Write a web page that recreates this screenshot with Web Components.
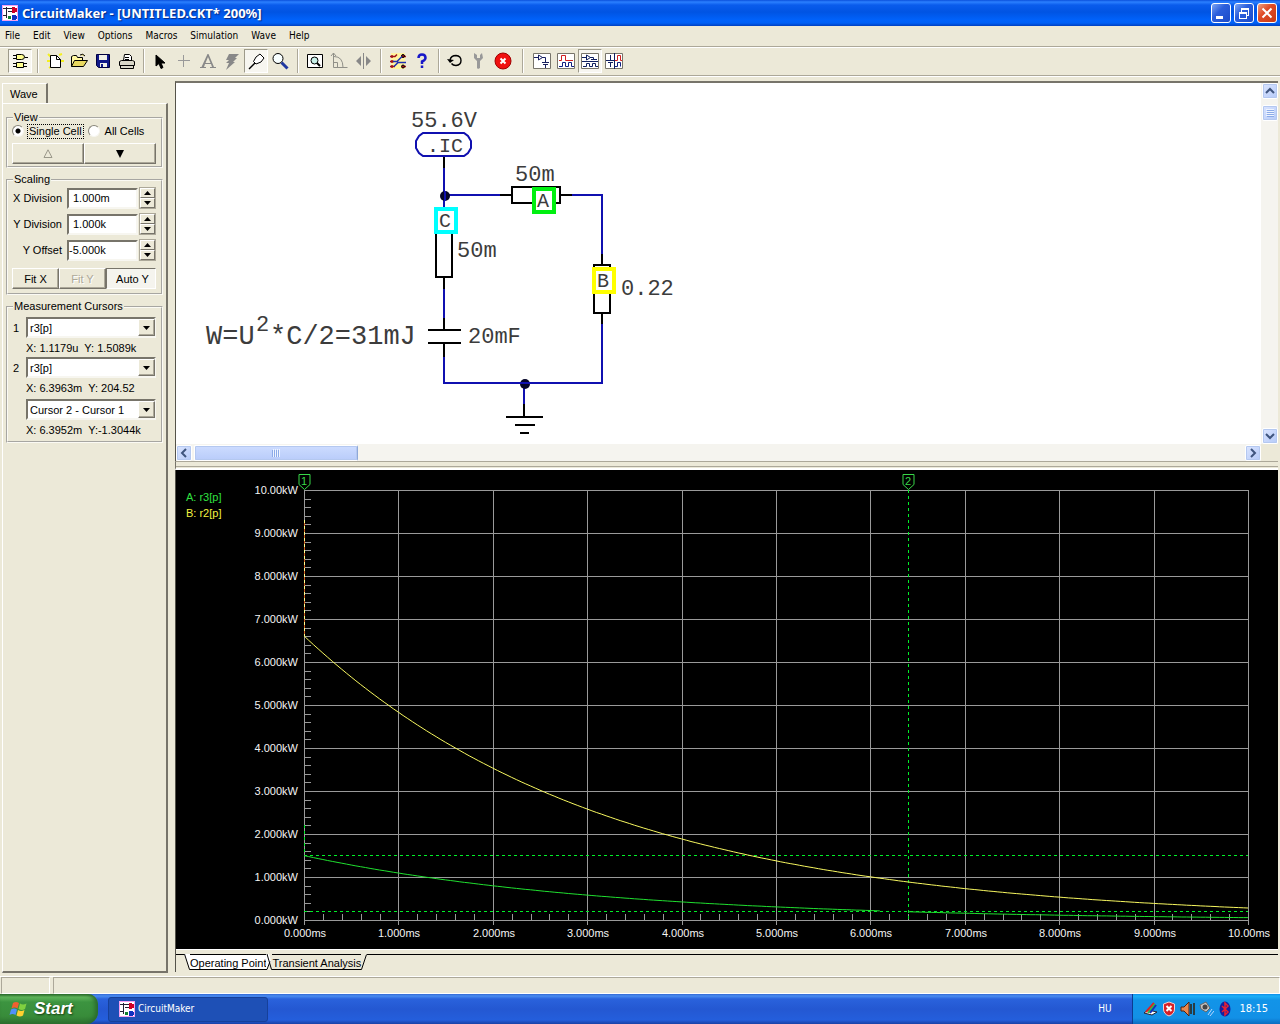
<!DOCTYPE html>
<html lang="en">
<head>
<meta charset="utf-8">
<title>CircuitMaker - [UNTITLED.CKT* 200%]</title>
<style>
  html, body { height: 100%; margin: 0; }
  body { background: #ece9d8; color: #000; font: 11px/14px "Liberation Sans", sans-serif; overflow: hidden; }
</style>
</head>
<body>
<circuit-app></circuit-app>
<script>
const logo = `<svg width="16" height="16" viewBox="0 0 16 16" shape-rendering="crispEdges"><path fill="#f4a0f0" d="M0 0h16v16H0z"/><path fill="#fff" d="M1 1h14v14H1z"/><path stroke="#223" stroke-width="1" fill="none" d="M1 3.500h9M4.500 2v11M1 10.500h4M6 6.500h4"/><path fill="#d00028" d="M10 2h3v1h2v4h-2v1h-3z"/><path fill="#1030c0" d="M10 10h4v1h1v3h-1v1h-4z"/><path fill="#108030" d="M6 11h3v3H6z"/></svg>`;

const base = `*{box-sizing:border-box} svg{display:block} button{font:inherit;color:inherit;padding:0;margin:0;border:0;background:none}`;
function define(name, html, setup) {
  const t = document.createElement('template');
  t.innerHTML = html;
  const style = document.createElement('style');
  style.textContent = base;
  t.content.prepend(style);
  customElements.define(name, class extends HTMLElement {
    connectedCallback() {
      if (this.shadowRoot) return;
      this.attachShadow({ mode: 'open' }).append(t.content.cloneNode(true));
      if (setup) setup(this, this.shadowRoot);
    }
  });
}

/* ---------- title bar ---------- */
define('title-bar', `<style>
:host{display:flex;align-items:center;gap:4px;height:26px;padding:0 3px 0 2px;flex:none;color:#fff;
 background:linear-gradient(#0a50dc 0,#2b80ff 2px,#0a5cec 5px,#0054e3 12px,#0062fb 20px,#0060f6 23px,#0040c0 26px)}
h1{flex:1;margin:0;font:bold 13px/20px "Noto Sans",sans-serif;text-shadow:1px 1px 1px #0a2a80;white-space:nowrap}
.b{display:flex;gap:3px}
button{width:20px;height:20px;border:1px solid #fff;border-radius:3px;background:linear-gradient(135deg,#7ea6f4,#2c5fdc 40%,#1c4bc8)}
button.x{background:linear-gradient(135deg,#f0a080,#e04c28 40%,#c83a14)}
</style>${logo}<h1><slot></slot></h1><div class="b">
<button aria-label="Minimize"><svg width="18" height="18"><path fill="#fff" d="M4 12h7v3H4z"/></svg></button>
<button aria-label="Restore"><svg width="18" height="18" fill="none" stroke="#fff" shape-rendering="crispEdges"><path stroke-width="2" d="M6 5h8M4 9h8"/><path d="M6.500 5v3M13.500 5v6.500h-2M4.500 9v5.500h7V9"/></svg></button>
<button class="x" aria-label="Close"><svg width="18" height="18" stroke="#fff" stroke-width="2"><path d="M4.500 4.500l9 9M13.500 4.500l-9 9"/></svg></button></div>`);

/* ---------- menu ---------- */
define('menu-bar', `<style>
:host{display:flex;gap:13px;height:20px;padding:0 5px;flex:none}
</style><slot></slot>`);
define('menu-item', `<style>:host{display:block;font:10px/20px "DejaVu Sans Condensed","Noto Sans",sans-serif}</style><button role="menuitem"><slot></slot></button>`);

/* ---------- tool bar ---------- */
define('tool-bar', `<style>
:host{display:flex;align-items:center;height:30px;padding:0 8px;flex:none;border-top:1px solid #aca899;border-bottom:1px solid #aca899;box-shadow:inset 0 1px #fff,0 1px #fff}
</style><slot></slot>`);
define('tool-button', `<style>
:host{display:block}
button{display:flex;align-items:center;justify-content:center;width:24px;height:24px}
:host([pressed]) button{border:1px solid;border-color:#9d9a8a #fff #fff #9d9a8a;background:#f7f6f0}
</style><button><slot></slot></button>`, (h, r) => r.querySelector('button').setAttribute('aria-label', h.getAttribute('label')));
define('tool-gap', `<style>
:host{display:flex;justify-content:center;width:11px;height:24px}
:host([size=narrow]){width:9px}:host([size=wide]){width:15px}
i{width:2px;border-left:1px solid #aca899;border-right:1px solid #fff}</style><i></i>`);

/* ---------- side panel ---------- */
define('group-box', `<style>
:host{display:block}
fieldset{margin:0;padding:0 5px 2px 4px;min-width:0;border:2px groove #fbfaf4}
legend{padding:0 1px;margin-left:1px;line-height:13px}
.c{padding-top:var(--inset,0)}
</style><fieldset><legend></legend><div class="c"><slot></slot></div></fieldset>`, (h, r) => r.querySelector('legend').textContent = h.getAttribute('label'));

define('view-choice', `<style>
:host{display:block}
.r{display:flex;gap:5px;height:14px;align-items:center}
label{display:flex;align-items:center;gap:4px;white-space:nowrap}
label span{padding:0 1px;line-height:13px}
label:first-child span{outline:1px dotted #000}
input{appearance:none;width:12px;height:12px;margin:0;border-radius:50%;border:1px solid;border-color:#87857a #f7f6f0 #f7f6f0 #87857a;background:#fff}
input:checked{background:radial-gradient(circle,#000 0 2px,#fff 3px)}
.b{display:flex;margin-top:5px}
button{flex:1;height:21px;border:1px solid;border-color:#fff #77746a #77746a #fff;box-shadow:inset -1px -1px #aca899;display:grid;place-items:center}
</style><div class="r"><label><input type="radio" name="cells" checked><span>Single Cell</span></label><label><input type="radio" name="cells"><span>All Cells</span></label></div>
<div class="b"><button disabled aria-label="Previous cell"><svg width="10" height="9" fill="none" stroke="#9a988a"><path d="M5 .8L9 8.500H1z"/></svg></button><button aria-label="Next cell"><svg width="10" height="9"><path d="M1 1h8L5 9z"/></svg></button></div>`);

define('spin-field', `<style>
:host{display:flex;align-items:center;height:22px;margin-bottom:4px}
label{flex:1;text-align:right;padding-right:5px;white-space:nowrap;line-height:20px}
input{width:71px;height:21px;font:inherit;border:2px solid;border-color:#77746a #f7f6f0 #f7f6f0 #77746a;padding:0 0 0 4px;background:#fff;outline:0}
:host([tight]) input{padding-left:0}
.s{display:flex;flex-direction:column;margin-left:1px;border:1px solid #aca899;width:17px}
button{width:15px;height:10px;border:1px solid;border-color:#fff #77746a #77746a #fff;display:grid;place-items:center}
</style><label for="v"></label><input id="v"><span class="s"><button aria-label="Increase"><svg width="7" height="4"><path d="M0 4h7L3.500 0z"/></svg></button><button aria-label="Decrease"><svg width="7" height="4"><path d="M0 0h7L3.500 4z"/></svg></button></span>`,
 (h, r) => { r.querySelector('label').textContent = h.getAttribute('label'); r.querySelector('input').value = h.getAttribute('value'); });

define('fit-buttons', `<style>
:host{display:flex;margin:7px 0 2px}
button{flex:1;height:21px;border:1px solid;border-color:#fff #77746a #77746a #fff;box-shadow:inset -1px -1px #aca899}
button:disabled{color:#aca899;text-shadow:1px 1px #fff}
button.on{border-color:#77746a #fff #fff #77746a;background:#f5f4ee;box-shadow:none;padding:1px 0 0 3px}
</style><button>Fit X</button><button disabled>Fit Y</button><button class="on" aria-pressed="true">Auto Y</button>`);

define('cursor-pick', `<style>
:host{display:grid;grid-template-columns:14px 1fr;align-items:center;margin-bottom:1px}
:host([last]){margin-top:3px}
label{padding-left:1px}
.w{position:relative}
select{appearance:none;display:block;width:100%;height:21px;margin:0;font:inherit;color:#000;padding:0 18px 0 2px;border:2px solid;border-color:#77746a #f7f6f0 #f7f6f0 #77746a;border-radius:0;background:#fff}
.w i{position:absolute;right:1px;top:2px;width:17px;height:17px;pointer-events:none;display:grid;place-items:center;background:#ece9d8;border:1px solid;border-color:#fff #77746a #77746a #fff;box-shadow:inset -1px -1px #aca899}
p{grid-column:2;margin:0;height:18px;line-height:20px;white-space:pre}
</style><label for="s"></label><span class="w"><select id="s"><option></option></select><i><svg width="7" height="4"><path d="M0 0h7L3.500 4z"/></svg></i></span><p></p>`,
 (h, r) => { r.querySelector('label').textContent = h.getAttribute('label') || ''; r.querySelector('select').ariaLabel = 'Cursor source'; r.querySelector('option').textContent = h.getAttribute('value'); r.querySelector('p').textContent = h.getAttribute('reading'); });

define('side-panel', `<style>
:host{display:flex;flex-direction:column;width:168px;flex:none;padding:7px 0 3px 2px}
.tab{align-self:flex-start;width:46px;height:20px;border-left:1px solid #fff;border-top:1px solid #fff;border-right:2px solid #77746a;text-align:left;padding-left:7px;font-size:11px}
.body{flex:1;border:1px solid #fff;border-right:2px solid #77746a;border-bottom:2px solid #77746a;padding:7px 3px 0 3px;display:flex;flex-direction:column;gap:5px}
.scale{--inset:1px}.meas{--inset:4px}
</style><button class="tab" role="tab">Wave</button><div class="body">
<group-box label="View"><view-choice></view-choice></group-box>
<group-box class="scale" label="Scaling"><spin-field label="X Division" value="1.000m"></spin-field><spin-field label="Y Division" value="1.000k"></spin-field><spin-field tight label="Y Offset" value="-5.000k"></spin-field><fit-buttons></fit-buttons></group-box>
<group-box class="meas" label="Measurement Cursors"><cursor-pick label="1" value="r3[p]" reading="X: 1.1179u  Y: 1.5089k"></cursor-pick><cursor-pick label="2" value="r3[p]" reading="X: 6.3963m  Y: 204.52"></cursor-pick><cursor-pick last value="Cursor 2 - Cursor 1" reading="X: 6.3952m  Y:-1.3044k"></cursor-pick></group-box>
</div>`);

/* ---------- scroll bars ---------- */
define('scroll-track', `<style>
:host{display:flex;flex:none;background:#f5f4ef;gap:2px;align-items:center}
:host([dir=v]){flex-direction:column;width:17px;gap:6px}
:host([dir=h]){height:17px}
.e,.t{flex:none;width:16px;height:16px;display:grid;place-items:center;border:1px solid #fff;outline:1px solid #b4c8f0;outline-offset:-2px;border-radius:2px;background:linear-gradient(135deg,#dbe5ff,#b5caf8)}
:host([dir=h]) .t{width:164px;background:linear-gradient(#cddcff,#b9ccfa);border-right:1px solid #8ea8d8}
:host([dir=h]) .t svg{transform:rotate(90deg)}
.g{flex:1}
</style><button class="e" aria-label="Back"></button><div class="t"><svg width="8" height="8" stroke="#eef4ff" shape-rendering="crispEdges"><path d="M0 .5h8M0 2.500h8M0 4.500h8M0 6.500h8"/><path stroke="#8cabe8" d="M1 1.500h7M1 3.500h7M1 5.500h7M1 7.500h7"/></svg></div><span class="g"></span><button class="e" aria-label="Forward"></button>`,
 (h, r) => { const v = h.getAttribute('dir') === 'v', b = r.querySelectorAll('button');
  const a = d => `<svg width="10" height="10" fill="none" stroke="#3f557e" stroke-width="2"><path d="${d}"/></svg>`;
  b[0].innerHTML = a(v ? 'M1 7l4-4 4 4' : 'M7 1L3 5l4 4'); b[1].innerHTML = a(v ? 'M1 3l4 4 4-4' : 'M3 1l4 4-4 4'); });

/* ---------- schematic ---------- */
define('schematic-view', `<style>
:host{display:flex;flex-direction:column;flex:none;background:#fff;border-left:1px solid #55534a;border-top:2px solid #77746a}
.m{display:flex;height:361px}
.c{flex:1;min-width:0;overflow:hidden}
.h{display:flex}.h scroll-track{flex:1}.h i{width:17px;background:#ece9d8}
text{font:22px "Liberation Mono",monospace;fill:#3c3c3c}
.w{stroke:#1010b0}.k{stroke:#000}
</style><div class="m"><div class="c"><svg width="560" height="361" viewBox="176 83 560 361" fill="none" stroke-width="2">
<g class="w"><path d="M444 157v50M444 195h68M560 195h42v70M602 314v69H444v-38M444 277v44M524 383v34"/></g>
<g class="k"><path d="M444 156v12M500 195h12M560 195h12M602 254v11M602 314v10M444 277v12M444 318v12M428 330h33M428 343h33M444 343v14M524 404v12M506 417h37M515 425h20M520 433h9"/>
<path fill="#fff" d="M512 187h48v16h-48zM436 220h16v57h-16zM594 265h16v48h-16z"/></g>
<circle cx="445" cy="196" r="5" fill="#050528"/><circle cx="525" cy="384" r="5" fill="#050528"/>
<path class="w" d="M445 191v10M520 383h10"/>
<path class="w" fill="#fff" d="M423 133h41l4 3 3 5v7l-3 5-4 3h-41l-4-3-3-5v-7l3-5z"/>
<g fill="#fff" stroke-width="4"><path stroke="#00ffff" d="M436 209h20v23h-20z"/><path stroke="#00f010" d="M534 189h20v23h-20z"/><path stroke="#ffff00" d="M594 269h20v23h-20z"/></g>
<g stroke="none"><text x="411" y="127">55.6V</text><text x="427" y="152" style="font-size:20px">.IC</text><text x="515" y="181">50m</text><text x="457" y="257">50m</text><text x="621" y="295">0.22</text><text x="468" y="343">20mF</text>
<text x="439" y="227" style="font-size:20px">C</text><text x="537" y="207" style="font-size:20px">A</text><text x="597" y="287" style="font-size:20px">B</text>
<text x="206" y="344" style="font-size:27px">W=U</text><text x="256" y="331">2</text><text x="270" y="344" style="font-size:27px">*C/2=31mJ</text></g>
</svg></div><scroll-track dir="v"></scroll-track></div><div class="h"><scroll-track dir="h"></scroll-track><i></i></div>`);

/* ---------- waveform chart ---------- */
define('wave-chart', `<style>
:host{display:block;flex:1;min-height:0;background:#000;overflow:hidden}
svg{width:100%;height:100%}
text{font:11px "Liberation Sans",sans-serif;fill:#f4f4f4;stroke:none}
.e{text-anchor:end}.m{text-anchor:middle}
</style><svg fill="none"></svg>`, (h, r) => {
  const svg = r.querySelector('svg');
  const draw = () => {
    const W = h.clientWidth, H = h.clientHeight;
    if (!W || !H) return;
    const L = 128, R = W - 30, T = 20, B = H - 29;
    const X = t => L + (R - L) * t / 10, Y = k => B - (B - T) * k / 10;
    const q = n => Math.round(n) + .5;
    let grid = '', s = '';
    for (let i = 0; i <= 10; i++) {
      grid += `M${q(X(i))} ${T}V${B + 5}M${L} ${q(Y(i))}H${R}`;
      const f = i === 10 ? '10.00' : i + '.000';
      s += `<text class="e" x="${L - 6}" y="${Math.round(Y(i)) + 4}">${f}kW</text><text class="m" x="${Math.round(X(i)) + 1}" y="${B + 17}">${f}ms</text>`;
      if (i < 10) for (let j = 1; j < 5; j++) grid += `M${q(X(i + j / 5))} ${B}v-6M${L} ${q(Y(i + j / 5))}h7`;
    }
    const curve = (p, a, b) => { let d = ''; for (let t = a; t <= b + .001; t += .05) d += (d ? 'L' : 'M') + X(t).toFixed(1) + ' ' + (Y(p * Math.exp(-t / 3.2)) + .5).toFixed(1); return d; };
    const flag = (x, n) => `<path stroke="#38d848" d="M${x - 5} 4.500h11v10l-5.500 5-5.500-5z"/><text class="m" style="fill:#38d848" x="${x}" y="15">${n}</text>`;
    const cx = q(X(6.3963));
    svg.innerHTML = `<path stroke="#9a9a9a" shape-rendering="crispEdges" d="${grid}"/>
     <path shape-rendering="crispEdges" stroke="#00f028" stroke-dasharray="3 3" d="M${L} ${q(Y(1.5089))}H${R}M${L} ${q(Y(.2045))}H${R}M${cx} ${T}V${B}M${L + .5} ${Y(2.2)}V${Y(1.5)}"/>
     <g shape-rendering="crispEdges"><path stroke="#d06020" d="M${L + .5} ${Y(9.3)}V${Y(6.6)}"/><path stroke="#ffff90" stroke-dasharray="3 3" d="M${L + .5} ${Y(9.3)}V${Y(6.6)}"/></g>
     <path stroke="#f8f860" d="${curve(6.62, 0, 10)}"/><path stroke="#20e030" d="${curve(1.509, 0, 6.1)}${curve(1.509, 6.4, 10)}"/>
     ${flag(L, 1)}${flag(cx - .5, 2)}${s}
     <text x="10" y="31" style="fill:#30e040">A: r3[p]</text><text x="10" y="47" style="fill:#f4f440">B: r2[p]</text>`;
  };
  new ResizeObserver(draw).observe(h);
  draw();
});

define('sheet-tabs', `<style>
:host{display:flex;height:23px;flex:none;border-top:1px solid #fff;padding-top:4px}
.l{height:1px;background:#000;width:8px}.r{flex:1}
button{display:flex;height:16px;white-space:nowrap}
.n{border-bottom:1px solid #000;height:16px;line-height:17px}
.a .n{background:#fff}
.a .n,.b .n{border-top:1px solid #000;line-height:16px}
</style><i class="l"></i>
<button class="a"><svg width="6" height="16"><path fill="#fff" d="M0 0h6v15.500z"/><path d="M.5 0l5 15.500h1" stroke="#000" fill="none"/></svg><span class="n">Operating Point</span><svg width="6" height="16"><path fill="#fff" d="M0 0h3l2 7-3 8.500H0z"/><path d="M0 15.500h1l3-8M1 0l4.500 15.500h1" stroke="#000" fill="none"/></svg></button>
<button class="b"><span class="n">Transient Analysis</span><svg width="6" height="16"><path d="M0 15.500h.5L5.500.5" stroke="#000" fill="none"/></svg></button><i class="l r"></i>`);

/* ---------- status + task bar ---------- */
define('status-strip', `<style>
:host{display:flex;gap:3px;height:18px;flex:none;padding-left:1px;border-top:1px solid #fff}
i{border-left:1px solid #aca899;border-top:1px solid #aca899;border-right:1px solid #fff;border-bottom:1px solid #fff;width:49px}i+i{flex:1}
</style><i></i><i></i>`);
define('task-bar', `<style>
:host{display:flex;align-items:center;height:30px;flex:none;color:#fff;font:10px/14px "DejaVu Sans Condensed",sans-serif;
 background:linear-gradient(#3168d5 0,#4a8cf0 2px,#2a62dc 5px,#2458d2 15px,#245edc 26px,#1941a5 30px)}
.start{display:flex;align-items:center;gap:5px;width:98px;height:30px;padding-left:9px;color:#fff;font:italic bold 17px/28px "Liberation Sans",sans-serif;text-shadow:1px 1px 2px #143c10;border-radius:0 10px 12px 0;background:linear-gradient(#2b6e2a 0,#62b85c 3px,#3c9440 8px,#388c3a 22px,#2c7030 30px);box-shadow:inset -3px 0 4px #2a6a2c}
.task{display:flex;align-items:center;gap:3px;width:160px;height:25px;margin-left:10px;padding-left:10px;border-radius:3px;background:#1e50b6;border:1px solid #16409a}
.sp{flex:1}.lang{padding-right:21px}
.tray{display:flex;align-items:center;gap:4px;height:30px;padding:0 12px 0 10px;border-left:1px solid #0c3c90;background:linear-gradient(#0c8ce8 0,#1cb0f8 2px,#1294e8 6px,#1290e6 24px,#0c6cc0 30px)}
time{margin-left:3px;font-size:11px}
</style><button class="start"><svg width="20" height="20" viewBox="0 0 20 20"><path fill="#f06030" d="M4 4q3-2 6 0L8.500 9.500q-3-2-6 0z"/><path fill="#80d040" d="M11 4.500q3 2 6.500 0L16 10q-3 2-6.500 0z"/><path fill="#5090f8" d="M2 10.500q3-2 6 0L6.500 16q-3-2-6 0z"/><path fill="#ffd030" d="M9 11q3 2 6.500 0L14 16.500q-3 2-6.500 0z"/></svg>Start</button>
<button class="task">${logo}CircuitMaker</button><span class="sp"></span><span class="lang">HU</span>
<div class="tray">
<svg width="15" height="16"><path fill="#fff" stroke="#223" d="M1 12l4-3 9 2-5 3z"/><path stroke-width="2" stroke="#e02020" d="M3 11l8-9"/><path stroke-width="2" stroke="#30c040" d="M5 12l7-9"/><path stroke-width="2" stroke="#1030c0" d="M7 12l6-8"/></svg>
<svg width="14" height="16"><path fill="#d82028" stroke="#f8d0d0" d="M7 1l5.500 2v5q0 5-5.500 7Q1.500 13 1.500 8V3z"/><path stroke="#fff" stroke-width="2" d="M4.500 5l5 5M9.500 5l-5 5"/></svg>
<svg width="15" height="16" fill="none"><path fill="#e88850" stroke="#502010" d="M1 6h3l5-5v14l-5-5H1z"/><path stroke="#302010" stroke-width="1.500" d="M11 3v10M14 2v12"/></svg>
<svg width="15" height="16"><path fill="#c4c4c4" stroke="#666" d="M1 4l6-3 4 6-4 4-5-3z"/><circle cx="6" cy="6" r="2.500" fill="#444"/><path fill="none" stroke="#b8d8ff" d="M9 14l4-6M11 15l4-5"/></svg>
<svg width="14" height="16"><ellipse cx="7" cy="8" rx="5.500" ry="7.500" fill="#1420a0"/><path fill="none" stroke="#e82030" stroke-width="1.500" d="M4 5l6 6-3 3V2l3 3-6 6"/></svg>
<time>18:15</time></div>`);

/* ---------- application ---------- */
const I = inner => `<svg width="18" height="18" viewBox="0 0 18 18" fill="none" stroke="#000">${inner}</svg>`;
const B = (label, inner, p = '') => `<tool-button label="${label}" ${p}>${I(inner)}</tool-button>`;
const frame = '<path fill="#fff" stroke="#77746a" d="M.5 1.500h17v15H.5z"/>';
define('circuit-app', `<style>
:host{display:flex;flex-direction:column;height:100vh;background:#ece9d8}
main{display:flex;flex:1;min-height:0;gap:7px;padding-right:2px}
.right{flex:1;min-width:0;display:flex;flex-direction:column;padding:5px 0 4px}
.split{height:9px;flex:none;border-top:1px solid #aca899;border-bottom:2px solid #fff;border-left:1px solid #77746a}
.split i{display:block;height:5px;border-bottom:1px solid #aca899}
.wave{flex:1;min-height:0;display:flex;flex-direction:column;border-left:1px solid #55534a}
</style>
<title-bar>CircuitMaker - [UNTITLED.CKT* 200%]</title-bar>
<menu-bar role="menubar"><menu-item>File</menu-item><menu-item>Edit</menu-item><menu-item>View</menu-item><menu-item>Options</menu-item><menu-item>Macros</menu-item><menu-item>Simulation</menu-item><menu-item>Wave</menu-item><menu-item>Help</menu-item></menu-bar>
<tool-bar role="toolbar">
${B('Parts', '<path fill="#ffff90" d="M5.500 2.500h5q3 0 3 2.500t-3 2.500h-5zM5.500 10.500h7v5h-7z"/><path d="M2 3.500h3M2 6.500h3M14 5.500h3M2 11.500h3M2 14.500h3M13 11.500h3M13 14.500h3"/>', 'pressed')}
<tool-gap></tool-gap>
${B('New', '<path stroke="#f4f020" stroke-width="2" d="M2 2l3 3M13 3l3-1M1 9h3M15 9h3M3 16l3-2"/><path fill="#fff" d="M4.500 3.500h6l4 4v8h-10z"/><path d="M10.500 3.500v4h4"/>')}
${B('Open', '<path fill="#fff7a0" d="M1.500 14.500v-10l2-1h3l1 2h5v3"/><path fill="#e8d860" d="M1.500 14.500l3-6h13l-4 6zM10 3q3-2 5 1"/>')}
${B('Save', '<path fill="#101888" stroke="#000040" d="M2.500 2.500h13v13h-11l-2-2z"/><path fill="#f0f0e8" stroke="none" d="M5 3h8v5H5zM6 11h7v4H6z"/><path fill="#101888" stroke="none" d="M7 12h2v3H7z"/>')}
${B('Print', '<path fill="#fff" d="M5.500 8.500l1-6h5l2 2v4"/><path fill="#d8d6c8" d="M1.500 9.500l2-1h11l2 1v4h-15zM2.500 13.500h13v3h-13z"/><path d="M7 5.500h4M7 7.500h4"/>')}
<tool-gap size="narrow"></tool-gap>
${B('Arrow', '<path fill="#000" d="M5 3v11l3-2.500 2 5 2-1-2-4.500h4z"/>')}
${B('Wire', '<path stroke="#999" d="M3 8.500h12M8.500 3v12"/>')}
${B('Text', '<path fill="#888" stroke="none" d="M1 16v-1h1.500L8.500 2h1L15 15h2v1h-6v-1h2l-1-3H6l-1 3h2v1zM6.500 11h5L9 5z" fill-rule="evenodd"/>')}
${B('Delete', '<path fill="#888" stroke="none" d="M6 2h10l-4 4h2l-4 4h2l-9 8 3-7H3l3-3H3z"/>')}
${B('Probe', '<path fill="#fff" d="M6.500 9.500L9 5l4-3 4 4-3 4-5 2z"/><path stroke-width="1.500" d="M2 17l6-6"/>', 'pressed')}
${B('Zoom', '<circle cx="7" cy="6.500" r="5" fill="#f8ffff"/><path stroke="#2038a0" stroke-width="3" d="M10.500 10.500l6 6"/>')}
<tool-gap></tool-gap>
${B('Fit', '<path fill="#fff" d="M1.500 2.500h15v13h-15z"/><circle cx="8.500" cy="8.500" r="3.500" fill="#c8f0e8"/><path stroke-width="2" d="M11 11l3 3"/>')}
${B('Rotate', '<path stroke="#909088" d="M3.500 1v14.500h14M1 4l2.500-3L6 4M4 4.500q9 0 9 11M3 10.500h4.500v5"/>')}
${B('Mirror', '<path stroke="#888" d="M9.500 1v16"/><path fill="#888" stroke="none" d="M7 4v10L2 9zM12 4v10l5-5z"/>')}
<tool-gap></tool-gap>
${B('Check', '<path fill="#fff4a0" stroke="none" d="M2 1h14v16H2z"/><path stroke="#a01018" stroke-width="1.500" d="M3 3v3M3 8v3M3 13v3M1 4.500h5l2-2M1 9.500h4M1 14.500h5M13 4.500h4M13 14.500h4"/><circle cx="14" cy="4" r="1.500" fill="#a01018"/><circle cx="14" cy="14.500" r="1.500" fill="#a01018"/><path stroke="#2030b0" stroke-width="1.500" d="M4 9.500h4l5-5M5 14.500l4-4h8"/>')}
${B('Help', '<path stroke="#1818c8" stroke-width="2.500" d="M5.500 6q0-3.500 3.500-3.500T12.500 6Q12.500 8 9 9.500V12M9 13.500V16"/>')}
<tool-gap size="narrow"></tool-gap>
${B('Reset', '<path stroke-width="1.400" d="M4 8q1-4.500 6-4.500 5 .5 5 5T10 13.500q-3 0-4.500-2"/><path fill="#000" stroke="none" d="M1 7l7 1-4 3z"/>')}
${B('Analyses', '<path fill="#999" stroke="none" d="M4 1l3 2v3h3V3l2-2 1 5-3 3v7l-2 1-1-1V9L4 6z"/>')}
${B('Stop', '<circle cx="9" cy="9" r="8" fill="#f01010" stroke="#a00000"/><path stroke="#fff" stroke-width="2" d="M6.500 6.500l5 5M11.500 6.500l-5 5"/>')}
<tool-gap size="wide"></tool-gap>
${B('Schematic only', frame + '<path stroke="#182060" d="M1 5.500h4M5.500 3v5l4-2.500zM9 5.500h3.500V10M9 10.500h7M10 12.500h5M12.500 13v3"/>')}
${B('Waves only', frame + '<path stroke="#d02020" d="M2 8.500h2.500v-5h4v5H16"/><path stroke="#102080" d="M2 14.500h3.500v-4h3v4h3v-4h3v4H17"/>')}
${B('Split horizontal', frame + '<path stroke="#102060" d="M1 9.500h16M1 5.500h4M5.500 3v5l4-2.500zM9 5.500h3.500V8M10 7.500h6M2 14.500h3.500v-3h3v3h3v-3h3v3H17"/>', 'pressed')}
${B('Split vertical', frame + '<path stroke="#102060" d="M9.500 1v16M5.500 3v6M1 8.500h8M3 10.500h5M5.500 11v4"/><path stroke="#d02020" d="M10 8.500h2.500v-5h3v5H17"/><path stroke="#102080" d="M10 14.500h2.500v-4h3v4"/>')}
</tool-bar>
<main><side-panel></side-panel><div class="right"><schematic-view></schematic-view><div class="split"><i></i></div><div class="wave"><wave-chart></wave-chart><sheet-tabs></sheet-tabs></div></div></main>
<status-strip></status-strip><task-bar></task-bar>`);
</script>
</body>
</html>
